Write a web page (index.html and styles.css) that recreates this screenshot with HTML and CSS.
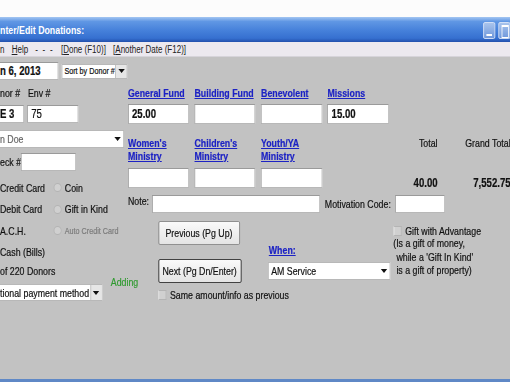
FILE: index.html
```html
<!DOCTYPE html>
<html lang="en">
<head>
  <meta charset="UTF-8" />
  <title>Enter/Edit Donations</title>
  <link rel="stylesheet" href="styles.css">
</head>
<body>
  <div class="frame">
  <div class="screen">
    <div class="top-gap"></div>

    <div class="titlebar">
      <span class="title">nter/Edit Donations:</span>
      <div class="tb-buttons">
        <span class="tb-btn tb-min"></span>
        <span class="tb-btn tb-max"></span>
      </div>
    </div>

    <div class="menubar">
      <span>n</span>
      <span><u>H</u>elp</span>
      <span class="dashes">- - -</span>
      <span>[<u>D</u>one (F10)]</span>
      <span>[<u>A</u>nother Date (F12)]</span>
    </div>

    <div class="client">
      <!-- donor side -->
      <div class="left">
        <div class="row date-row">
          <input class="field bold cut date" type="text" value="n 6, 2013" readonly>
          <div class="combo sort-combo">
            <span class="combo-text">Sort by Donor #</span>
            <span class="combo-arrow boxed"></span>
          </div>
        </div>

        <div class="row labels-row">
          <span class="donor-lbl">nor #</span>
          <span>Env #</span>
        </div>

        <div class="row ids-row">
          <input class="field bold cut donor-no" type="text" value="E 3" readonly>
          <input class="field env-no" type="text" value="75" readonly>
        </div>

        <div class="combo cut name-combo">
          <span class="combo-text muted">n Doe</span>
          <span class="combo-arrow"></span>
        </div>

        <div class="row check-row">
          <span class="check-lbl">eck #</span>
          <input class="field check-no" type="text" value="" readonly>
        </div>

        <div class="pay-grid">
          <span>Credit Card</span>
          <span class="opt"><span class="radio"></span>Coin</span>
          <span>Debit Card</span>
          <span class="opt"><span class="radio"></span>Gift in Kind</span>
          <span>A.C.H.</span>
          <span class="opt disabled"><span class="radio"></span>Auto Credit Card</span>
          <span>Cash (Bills)</span>
          <span></span>
        </div>

        <div class="donors">of 220 Donors</div>

        <div class="row payment-row">
          <div class="combo cut payment-combo">
            <span class="combo-text">tional payment method</span>
            <span class="combo-arrow boxed"></span>
          </div>
          <span class="adding">Adding</span>
        </div>
      </div>

      <!-- gift side -->
      <div class="main">
        <div class="funds">
          <div class="fund">
            <a href="#" class="fund-link">General Fund</a>
            <input class="field bold amount" type="text" value="25.00" readonly>
          </div>
          <div class="fund">
            <a href="#" class="fund-link">Building Fund</a>
            <input class="field amount" type="text" value="" readonly>
          </div>
          <div class="fund">
            <a href="#" class="fund-link">Benevolent</a>
            <input class="field amount" type="text" value="" readonly>
          </div>
          <div class="fund">
            <a href="#" class="fund-link">Missions</a>
            <input class="field bold amount" type="text" value="15.00" readonly>
          </div>
          <div class="fund-spacer"></div>
          <div class="fund-spacer"></div>

          <div class="fund fund-2">
            <a href="#" class="fund-link">Women's<br>Ministry</a>
            <input class="field amount" type="text" value="" readonly>
          </div>
          <div class="fund fund-2">
            <a href="#" class="fund-link">Children's<br>Ministry</a>
            <input class="field amount" type="text" value="" readonly>
          </div>
          <div class="fund fund-2">
            <a href="#" class="fund-link">Youth/YA<br>Ministry</a>
            <input class="field amount" type="text" value="" readonly>
          </div>
          <div class="fund-spacer"></div>
          <div class="total">
            <span class="total-lbl">Total</span>
            <span class="total-val">40.00</span>
          </div>
          <div class="total">
            <span class="total-lbl">Grand Total</span>
            <span class="total-val">7,552.75</span>
          </div>
        </div>

        <div class="row note-row">
          <span class="note-lbl">Note:</span>
          <input class="field note" type="text" value="" readonly>
          <span class="motive-lbl">Motivation Code:</span>
          <input class="field motive" type="text" value="" readonly>
        </div>

        <div class="lower">
          <div class="nav-col">
            <button class="btn btn-prev">Previous (Pg Up)</button>
            <button class="btn btn-next">Next (Pg Dn/Enter)</button>
            <div class="opt same-row"><span class="checkbox"></span>Same amount/info as previous</div>
          </div>

          <div class="when-col">
            <a href="#" class="fund-link when-link">When:</a>
            <div class="combo when-combo">
              <span class="combo-text">AM Service</span>
              <span class="combo-arrow"></span>
            </div>
          </div>

          <div class="gift-col">
            <div class="opt"><span class="checkbox"></span>Gift with Advantage</div>
            <div class="gift-note">(Is a gift of money,</div>
            <div class="gift-note indent">while a 'Gift In Kind'</div>
            <div class="gift-note indent">is a gift of property)</div>
          </div>
        </div>
      </div>
    </div>

    <div class="bottom-edge"></div>
  </div>
  </div>
</body>
</html>
```

FILE: styles.css
```css
/* Reset & basics */
* {
  box-sizing: border-box;
}
body {
  margin: 0;
  background: #fff;
  font-family: "Liberation Sans", Arial, sans-serif;
  font-size: 11px;
  color: #111;
  overflow: hidden;
}
.frame {
  width: 510px;
  height: 382px;
  overflow: hidden;
}
/* the old app screen is squeezed sideways, so lay it out wide and squash it */
.screen {
  width: 637.5px;
  height: 382px;
  display: flex;
  flex-direction: column;
  transform: scaleX(0.8);
  transform-origin: 0 0;
  white-space: nowrap;
}
.top-gap {
  height: 17px;
  background: #fcfcfc;
}

/* Window chrome */
.titlebar {
  height: 25px;
  display: flex;
  justify-content: space-between;
  align-items: center;
  background: linear-gradient(#a4c6f2 0%, #6097e4 18%, #4580da 55%, #3670d0 85%, #2250ac 100%);
}
.title {
  color: #fff;
  font-weight: bold;
  font-size: 11px;
}
.tb-buttons {
  display: flex;
  gap: 4px;
  align-self: flex-start;
  margin-top: 5px;
}
.tb-btn {
  position: relative;
  width: 15px;
  height: 17px;
  border: 1px solid #dfe8f8;
  border-radius: 2px;
  background: linear-gradient(#a9c4ec, #6f98dc);
}
.tb-min::after {
  content: "";
  position: absolute;
  left: 3px;
  bottom: 2px;
  width: 7px;
  height: 2px;
  background: #fff;
}
.tb-max::after {
  content: "";
  position: absolute;
  left: 3px;
  top: 2px;
  width: 7px;
  height: 10px;
  border: 1px solid #fff;
  border-top-width: 2px;
}
.menubar {
  height: 15px;
  display: flex;
  align-items: center;
  gap: 9px;
  background: #ece9ef;
  border-bottom: 1px solid #d6d4da;
  font-size: 10px;
  color: #222;
}
.dashes {
  letter-spacing: 1.5px;
}

/* Client area */
.client {
  flex: 1;
  display: flex;
  background: #c2c2c2;
  -webkit-text-stroke: 0.2px currentColor;
}
.bottom-edge {
  height: 3px;
  background: #5f88c6;
}
.row {
  display: flex;
  align-items: center;
}
.field {
  display: block;
  height: 18px;
  margin: 0;
  padding: 0 4px;
  border: 1px solid #b8b8b8;
  border-top-color: #9a9a9a;
  border-left-color: #9a9a9a;
  background: #fff;
  font-family: inherit;
  font-size: 12px;
  color: #111;
  outline: none;
}
.bold {
  font-weight: bold;
}
.combo {
  display: flex;
  align-items: center;
  justify-content: space-between;
  height: 18px;
  padding-left: 3px;
  border: 1px solid #b8b8b8;
  background: #fff;
  font-size: 11px;
  overflow: hidden;
}
.cut {
  border-left: none;
  padding-left: 0;
}
.combo-arrow {
  width: 14px;
  height: 100%;
  display: flex;
  align-items: center;
  justify-content: center;
}
.combo-arrow::after {
  content: "";
  border-left: 4px solid transparent;
  border-right: 4px solid transparent;
  border-top: 4px solid #111;
}
.combo-arrow.boxed {
  background: #e6e6e6;
  border-left: 1px solid #bbb;
}
.muted {
  color: #666;
}

/* Left column */
.left {
  width: 160px;
  flex-shrink: 0;
  padding-top: 5px;
}
.date {
  width: 72.5px;
}
.sort-combo {
  width: 82.5px;
  height: 15px;
  margin-left: 4px;
  font-size: 9px;
}
.labels-row {
  height: 12px;
  margin-top: 7px;
}
.donor-lbl {
  width: 35px;
}
.ids-row {
  margin-top: 6px;
  gap: 4px;
}
.donor-no {
  width: 30px;
}
.env-no {
  width: 64px;
}
.name-combo {
  width: 155px;
  margin-top: 7px;
}
.check-row {
  height: 18px;
  margin-top: 5px;
}
.check-lbl {
  width: 26px;
}
.check-no {
  width: 69px;
}
.pay-grid {
  display: grid;
  grid-template-columns: 66px auto;
  grid-auto-rows: 21.5px;
  align-items: center;
  margin-top: 6px;
}
.opt {
  display: flex;
  align-items: center;
}
.radio {
  width: 10px;
  height: 9px;
  margin: 0 4px 0 1px;
  border-radius: 50%;
  border: 1px solid #b4b4b4;
  background: #d0d0d0;
}
.opt.disabled {
  font-size: 9px;
  color: #7b7b7b;
}
.donors {
  height: 14px;
  line-height: 14px;
  margin-top: 1px;
}
.payment-row {
  margin-top: 6px;
  align-items: flex-start;
}
.payment-combo {
  width: 127.5px;
  height: 17px;
  flex-shrink: 0;
}
.adding {
  margin: -8px 0 0 11px;
  color: #2f9a2f;
}

/* Main column */
.main {
  flex: 1;
  padding-top: 30px;
}
.funds {
  display: grid;
  grid-template-columns: repeat(4, 76.25px) 54.4px 84.4px;
  column-gap: 6.9px;
  row-gap: 13px;
}
.fund {
  display: flex;
  flex-direction: column;
}
.fund-link {
  height: 12px;
  margin-bottom: 5px;
  line-height: 12px;
  color: #1c22c4;
  font-weight: bold;
  text-decoration: underline;
}
.fund-2 .fund-link {
  height: 26px;
  line-height: 13px;
}
.amount {
  width: 76.25px;
  height: 20px;
}
.total {
  display: flex;
  flex-direction: column;
  align-items: flex-end;
}
.total-lbl {
  line-height: 13px;
}
.total-val {
  margin-top: 26px;
  font-size: 12px;
  font-weight: bold;
}
.note-row {
  margin-top: 5px;
}
.note-lbl {
  width: 30px;
  align-self: flex-start;
}
.note {
  width: 210px;
}
.motive-lbl {
  width: 87.5px;
  margin-left: 6px;
}
.motive {
  width: 62.5px;
}

/* Lower area */
.lower {
  display: flex;
}
.nav-col {
  width: 137.5px;
  margin-left: 37.5px;
  display: flex;
  flex-direction: column;
  align-items: flex-start;
}
.btn {
  height: 24px;
  width: 102.5px;
  padding: 0;
  border: 1px solid #8a8a8a;
  border-radius: 2px;
  background: linear-gradient(#fafafa, #e4e4e4);
  font-family: inherit;
  font-size: 11px;
  color: #111;
  -webkit-text-stroke: 0.2px currentColor;
}
.btn-prev {
  margin-top: 8px;
}
.btn-next {
  width: 104px;
  margin-top: 14px;
  border-color: #333;
}
.same-row {
  margin-top: 6px;
}
.checkbox {
  width: 10px;
  height: 10px;
  margin-right: 5px;
  border: 1px solid #b4b4b4;
  border-left-color: #e8e8e8;
  background: #d0d0d0;
}
.when-col {
  width: 152.5px;
  padding-top: 31px;
  display: flex;
  flex-direction: column;
  align-items: flex-start;
}
.when-link {
  margin-left: 1px;
  margin-bottom: 6px;
}
.when-combo {
  width: 152.5px;
}
.gift-col {
  margin-left: 4px;
  padding-top: 12px;
}
.gift-note {
  line-height: 13.5px;
}
.gift-note.indent {
  padding-left: 4px;
}
```
